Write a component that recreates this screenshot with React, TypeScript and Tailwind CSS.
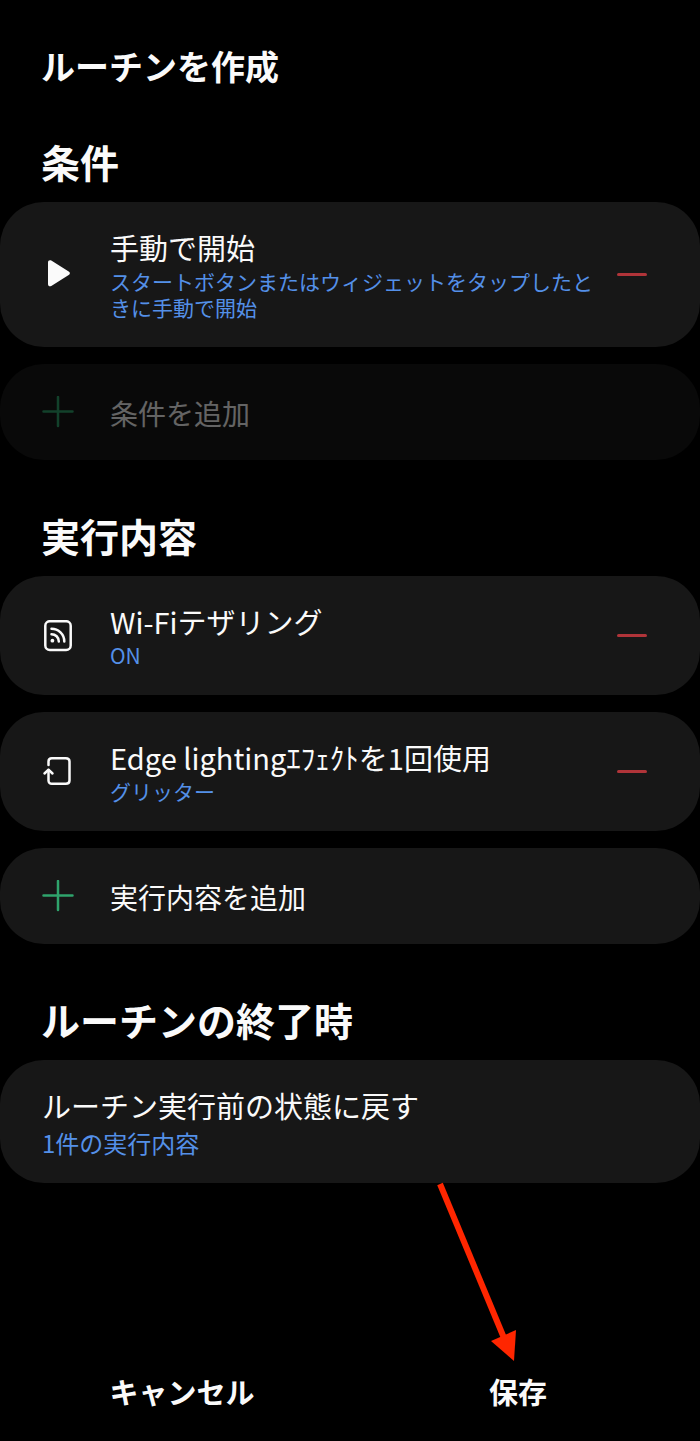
import React from "react";

// ── Icons ────────────────────────────────────────────────────────────────────

const PlayIcon = () => (
  <svg viewBox="0 0 32 32" className="size-8" fill="#fafafa" aria-hidden="true">
    <path d="M6 3.500v21.500c0 2 1.700 2.900 3.300 1.900l17.400-10.800c1.600-1 1.600-2.600 0-3.600L9.300 1.600C7.700.6 6 1.500 6 3.500z" />
  </svg>
);

const HotspotIcon = () => (
  <svg
    viewBox="0 0 32 32"
    className="size-8"
    fill="none"
    stroke="#fafafa"
    strokeWidth="2.5"
    strokeLinecap="round"
    aria-hidden="true"
  >
    <rect x="3.3" y="1.2" width="25.4" height="28.8" rx="4.5" />
    <path d="M9.5 8.7c6.9 0 12.8 5.5 12.8 12.8" />
    <path d="M9.5 14.2c4 0 7.3 3 7.3 7.3" />
    <circle cx="10.4" cy="20.7" r="1.9" fill="#fafafa" stroke="none" />
  </svg>
);

const EdgeIcon = () => (
  <svg
    viewBox="0 0 32 32"
    className="size-8"
    fill="none"
    stroke="#fafafa"
    strokeWidth="2.5"
    strokeLinecap="round"
    strokeLinejoin="round"
    aria-hidden="true"
  >
    <path d="M6.5 9V5.5c0-2 1.2-3.3 3.3-3.3h14c2.1 0 3.7 1.3 3.7 3.3v19c0 2-1.6 3.3-3.7 3.3h-14c-2.1 0-3.3-1.3-3.3-3.3V14" />
    <path d="M2.5 17.5l4-3.8 4 3.8" />
  </svg>
);

const PlusIcon = () => (
  <svg
    viewBox="0 0 32 32"
    className="size-8"
    stroke="#2fa46c"
    strokeWidth="2.5"
    strokeLinecap="round"
    aria-hidden="true"
  >
    <path d="M1.5 15.500h29M16 1v29" />
  </svg>
);

// ── Rows ─────────────────────────────────────────────────────────────────────

type RoutineItemProps = {
  icon: React.ReactNode;
  title: string;
  detail: string;
  label: string;
};

const RoutineItem: React.FC<RoutineItemProps> = ({
  icon,
  title,
  detail,
  label,
}) => (
  <li className="flex items-center rounded-[44px] bg-[#171717] pt-[27px] pr-[37px] pb-[27px] pl-[42px]">
    <div className="mr-9 shrink-0">{icon}</div>
    <div className="min-w-0 flex-1">
      <h3 className="text-[29px] leading-9">{title}</h3>
      <p className="mt-[3px] text-[21px] leading-[26px] text-[#5490e8]">
        {detail}
      </p>
    </div>
    <button
      type="button"
      aria-label={`${label}を削除`}
      className="flex h-11 w-[62px] shrink-0 items-center justify-center"
    >
      <span className="h-[3px] w-[30px] rounded-full bg-[#b03439]" />
    </button>
  </li>
);

type AddButtonProps = {
  label: string;
  disabled?: boolean;
};

const AddButton: React.FC<AddButtonProps> = ({ label, disabled }) => (
  <button
    type="button"
    disabled={disabled}
    className="flex h-24 w-full items-center gap-9 rounded-[44px] bg-[#171717] px-[42px] text-left text-[28px] leading-9 disabled:opacity-40"
  >
    <PlusIcon />
    <span className="pt-0.5">{label}</span>
  </button>
);

// ── Section ──────────────────────────────────────────────────────────────────

type SectionProps = {
  title: string;
  children: React.ReactNode;
};

const Section: React.FC<SectionProps> = ({ title, children }) => (
  <section>
    <h2 className="mb-[15px] px-[41px] text-[39px] leading-[52px] font-bold">
      {title}
    </h2>
    <div className="flex flex-col gap-[17px]">{children}</div>
  </section>
);

// ── App ──────────────────────────────────────────────────────────────────────

const App = () => {
  return (
    <div
      lang="ja"
      className="flex min-h-screen flex-col bg-black font-['Noto_Sans_CJK_JP',sans-serif] text-[#fafafa]"
    >
      <header className="px-[41px] pt-[42px] pb-[45px]">
        <h1 className="text-[34px] leading-[48px] font-bold">ルーチンを作成</h1>
      </header>

      <main className="flex flex-col gap-[49px]">
        <Section title="条件">
          <ul>
            <RoutineItem
              icon={<PlayIcon />}
              title="手動で開始"
              detail="スタートボタンまたはウィジェットをタップしたときに手動で開始"
              label="手動で開始"
            />
          </ul>
          <AddButton label="条件を追加" disabled />
        </Section>

        <Section title="実行内容">
          <ul className="flex flex-col gap-[17px]">
            <RoutineItem
              icon={<HotspotIcon />}
              title="Wi-Fiテザリング"
              detail="ON"
              label="Wi-Fiテザリング"
            />
            <RoutineItem
              icon={<EdgeIcon />}
              title="Edge lightingｴﾌｪｸﾄを1回使用"
              detail="グリッター"
              label="Edge lightingｴﾌｪｸﾄ"
            />
          </ul>
          <AddButton label="実行内容を追加" />
        </Section>

        <Section title="ルーチンの終了時">
          <button
            type="button"
            className="w-full rounded-[44px] bg-[#171717] px-[42px] pt-[27px] pb-[25px] text-left"
          >
            <span className="block text-[29px] leading-9">
              ルーチン実行前の状態に戻す
            </span>
            <span className="mt-[5px] block text-2xl leading-[30px] text-[#5490e8]">
              1件の実行内容
            </span>
          </button>
        </Section>
      </main>

      <footer className="mt-auto grid grid-cols-2 px-3.5 pt-24 pb-[30px] text-[29px] leading-10 font-bold">
        <div className="flex justify-center">
          <button type="button">キャンセル</button>
        </div>
        <div className="flex justify-center">
          <div className="relative">
            <button type="button">保存</button>
            {/* Pointer to the save button */}
            <svg
              viewBox="0 0 88 184"
              className="pointer-events-none absolute right-7 bottom-full mb-[7px] h-[184px] w-[88px]"
              aria-hidden="true"
            >
              <path d="M9 4l64 154" stroke="#ff2600" strokeWidth="6" />
              <path d="M60 161l25-11-2 31z" fill="#ff2600" />
            </svg>
          </div>
        </div>
      </footer>
    </div>
  );
};

export default App;
